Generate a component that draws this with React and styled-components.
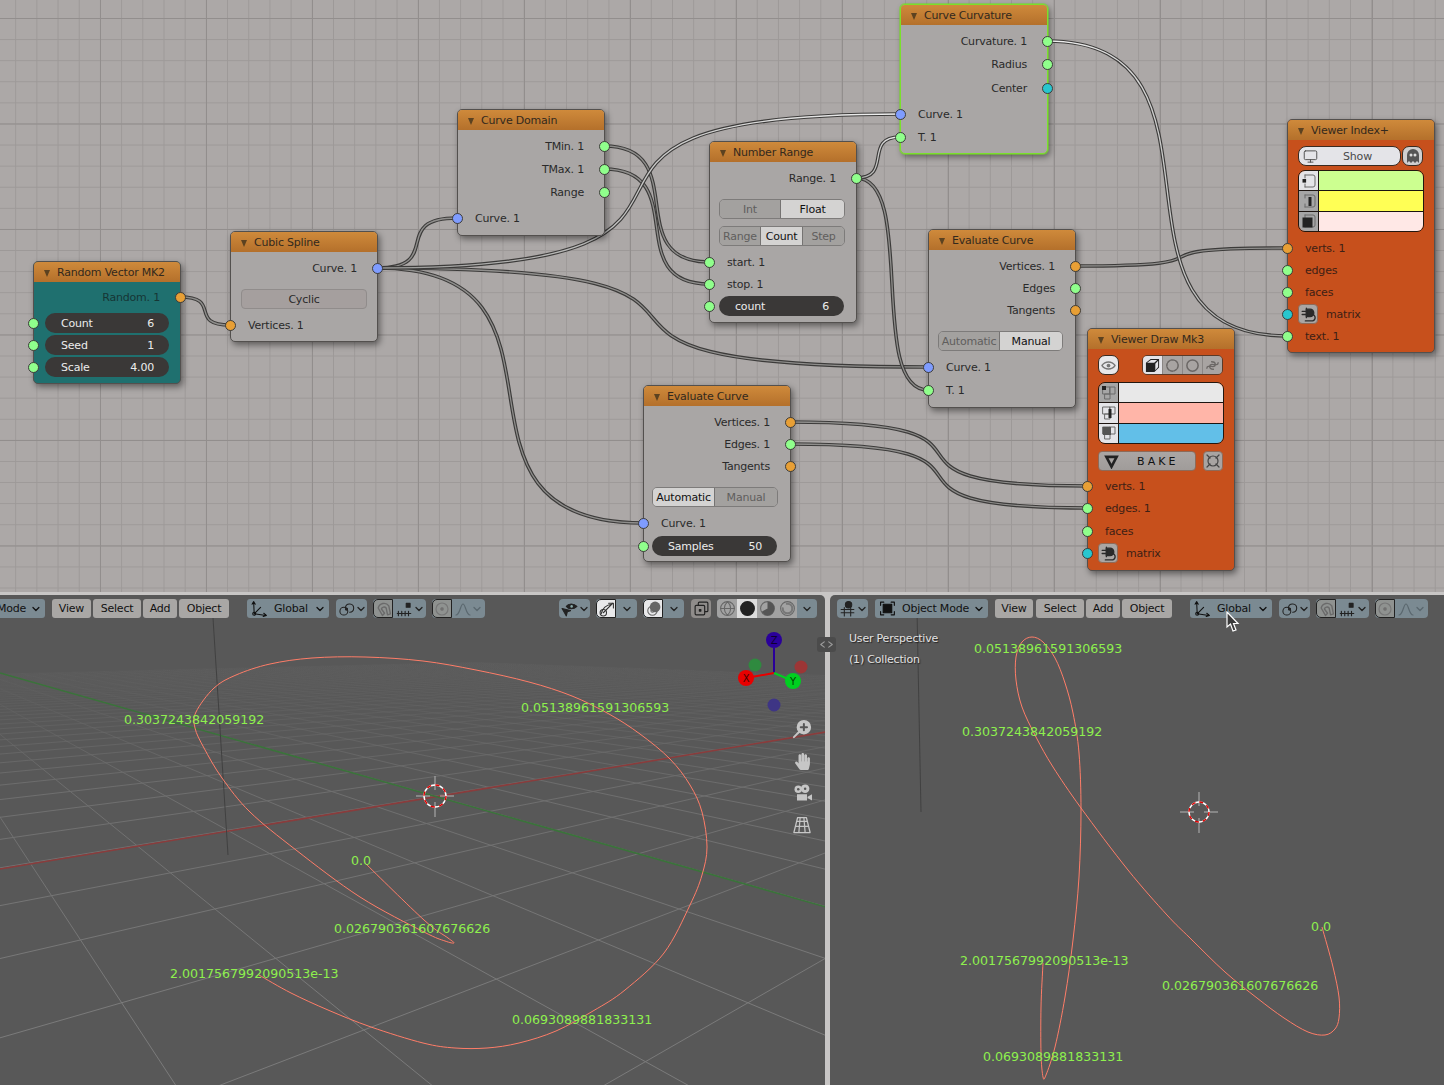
import React from 'react';
import styled, { createGlobalStyle } from 'styled-components';
import { FaHandPaper } from 'react-icons/fa';
import { Monitor } from 'lucide-react';

const Global = createGlobalStyle`
  html, body { margin: 0; padding: 0; background: #585858; }
  * { box-sizing: border-box; }
  #root { font-family: "DejaVu Sans", "Liberation Sans", sans-serif; font-size: 11px; letter-spacing: -0.2px; }
`;

const Page = styled.div`width: 1444px; height: 1085px; overflow: hidden; display: flex; flex-direction: column;`;

/* ---------- node editor ---------- */
const Editor = styled.div`
  position: relative; height: 592px; flex: none; overflow: hidden;
  background-color: #aca8a7;
  background-image:
    linear-gradient(to right, #928e8d 1px, transparent 1px),
    linear-gradient(to bottom, #928e8d 1px, transparent 1px),
    linear-gradient(to right, #9d9998 1px, transparent 1px),
    linear-gradient(to bottom, #9d9998 1px, transparent 1px);
  background-size: 106px 106px, 105.5px 105.5px, 21.2px 21.2px, 21.1px 21.1px;
  background-position: 100px 0, 0 18px, 15.2px 0, 0 18px;
`;
const WireLayer = styled.svg`position: absolute; inset: 0; width: 100%; height: 100%;`;
const Node = styled.div`
  position: absolute; left: ${p => p.$x}px; top: ${p => p.$y}px; width: 148px; height: ${p => p.$h}px;
  background: ${p => p.$bg || '#a9a6a5'};
  border: 1px solid ${p => p.$active ? '#7be02c' : '#53504e'};
  border-radius: 5px;
  box-shadow: ${p => p.$active ? '0 0 0 1px rgba(120,220,40,.55), ' : ''}2px 3px 6px rgba(0,0,0,.45);
  color: ${p => p.$ink || '#2a2a2a'};
`;
const Head = styled.div`
  height: 20px; display: flex; align-items: center; padding-left: 10px; gap: 7px;
  background: linear-gradient(#cf8a3b, #b4702b);
  border-radius: 4px 4px 0 0; color: #33291d; white-space: nowrap;
`;
const Arrow = styled.i`
  width: 0; height: 0; border-left: 3.5px solid transparent; border-right: 3.5px solid transparent;
  border-top: 7px solid #5c4220; margin-top: 2px;
`;
const Row = styled.div`
  position: relative; height: 20px; margin-top: ${p => p.$mt}px; display: flex; align-items: center;
  justify-content: ${p => p.$out ? 'flex-end' : 'flex-start'};
  padding: ${p => p.$out ? '0 20px 0 0' : `0 0 0 ${p.$pl || 17}px`}; white-space: nowrap;
`;
const WidgetRow = styled.div`
  position: relative; height: 20px; margin-top: ${p => p.$mt}px; padding-left: ${p => p.$l || 10}px;
  display: flex; align-items: stretch; gap: ${p => p.$gap || 0}px;
`;
const Socket = styled.span`
  position: absolute; top: 4.5px; width: 11px; height: 11px; border-radius: 50%;
  background: ${p => p.$c}; border: 1px solid #3d3c3a;
  ${p => p.$out ? 'right: -6px;' : 'left: -6px;'}
`;
const Pill = styled.div`
  width: ${p => p.$w || 124}px; background: #3a3837; border-radius: 10px; color: #ececec;
  display: flex; justify-content: space-between; align-items: center; padding: 0 15px 0 16px;
`;
const Toggle = styled.div`
  width: ${p => p.$w || 126}px; display: flex; border: 1px solid #7d7b7a; border-radius: 5px; overflow: hidden;
`;
const ToggleCell = styled.div`
  width: ${p => p.$w}px; flex: ${p => p.$w ? 'none' : 1}; display: flex; align-items: center; justify-content: center;
  background: ${p => p.$on ? '#d4d3d2' : '#a3a19f'}; color: ${p => p.$on ? '#111' : '#605e5d'};
  & + & { border-left: 1px solid #757372; }
`;
const WideButton = styled.div`
  width: 126px; display: flex; align-items: center; justify-content: center;
  background: #a59f9e; border: 1px solid #908c8b; border-radius: 4px; color: #2a2a2a;
`;
const ShowBtn = styled.div`
  width: 103px; background: #e4e4e8; border: 1px solid #3a2a20; border-radius: 8px; color: #4a4a4a;
  display: flex; align-items: center; justify-content: center; position: relative; padding-left: 16px;
  & > svg { position: absolute; left: 4px; }
`;
const IconBtn = styled.div`
  width: ${p => p.$w || 21}px; display: flex; align-items: center; justify-content: center; flex: none;
  background: ${p => p.$bg || '#cfcfd0'}; border: 1px solid ${p => p.$line || '#3a2a20'}; border-radius: ${p => p.$r || 7}px;
  color: ${p => p.$ink || '#333'}; margin-left: ${p => p.$ml || 0}px;
`;
const IconStrip = styled.div`
  display: flex; margin-left: 23px; border: 1px solid #5b3a28; border-radius: 5px; overflow: hidden; width: 81px;
`;
const StripCell = styled.div`
  flex: 1; display: flex; align-items: center; justify-content: center;
  background: ${p => p.$on ? '#e4e4e8' : '#a8a4a2'}; color: ${p => p.$on ? '#222' : '#6e6a68'};
  & + & { border-left: 1px solid #8a8684; }
`;
const BakeBtn = styled.div`
  width: 98px; background: linear-gradient(#aaa6a4, #a09c9a); border: 1px solid #8e6a58; border-radius: 4px; color: #111;
  display: flex; align-items: center; letter-spacing: 3.1px; font-size: 11px; padding-left: 5px; gap: 18px;
`;
const PlugBtn = styled.div`
  position: absolute; left: 10px; top: 0; width: 20px; height: 20px; background: #aaa6a4;
  border: 1px solid #8e6a58; border-radius: 4px; display: flex; align-items: center; justify-content: center; color: #2a2a2a;
`;
const ColorTable = styled.div`
  margin: ${p => p.$mt}px 0 0 10px; width: 126px; height: ${p => p.$h}px; display: flex; flex-direction: column;
  border: 1px solid #23170f; border-radius: 7px; overflow: hidden;
`;
const ColorRow = styled.div`
  flex: 1; display: flex; & + & { border-top: 1px solid #1c1410; }
`;
const IconCell = styled.div`
  width: 20px; flex: none; border-right: 1px solid #1c1410; background: ${p => p.$bg};
  display: flex; align-items: center; justify-content: center; color: #555;
`;
const Swatch = styled.div`flex: 1; background: ${p => p.$c};`;

/* ---------- viewports ---------- */
const ViewRow = styled.div`
  position: relative; flex: 1; display: flex; gap: 5px; padding-top: 3px; background: #c8c6c5;
`;
const Viewport = styled.div`
  position: relative; width: ${p => p.$w}px; overflow: hidden; background: #585858;
  border-radius: ${p => p.$r};
`;
const Scene = styled.svg`position: absolute; inset: 0; width: 100%; height: 100%;`;
const Bar = styled.div`position: relative; display: flex; align-items: center; height: 19px; margin-top: 4px; padding-right: 8px; color: #111;`;
const Menu = styled.div`
  width: ${p => p.$w}px; height: 19px; flex: none; margin-left: ${p => p.$ml}px; background: #a9a7a5; border-radius: 3px;
  display: flex; align-items: center; justify-content: center; white-space: nowrap;
`;
const Drop = styled(Menu)`
  background: #7b8a92; justify-content: flex-start; padding: 0 4px 0 4px; gap: 5px;
  & > svg:last-child { margin-left: auto; }
`;
const DropText = styled.span`margin-left: ${p => p.$ml}px;`;
const Tools = styled.div`
  width: ${p => p.$w}px; height: 19px; flex: none; display: flex; margin-left: ${p => p.$ml}px; background: #7b8a92; border-radius: 4px; overflow: hidden;
  ${p => p.$push ? 'margin-left: auto;' : ''}
`;
const Tool = styled.div`
  width: ${p => p.$w || 20}px; flex: none; display: flex; align-items: center; justify-content: center; gap: 1px;
  background: ${p => p.$on ? '#e8e8ea' : p.$bg || 'transparent'}; color: ${p => p.$dim ? '#5b686f' : p.$on ? '#333' : '#222'};
  ${p => p.$on === 'soft' ? 'background:#8f9290;' : ''}
  ${p => p.$edge ? 'border: 1px solid #222; border-radius: 5px 0 0 5px;' : ''}
`;
const Flag = styled.div`
  position: absolute; left: ${p => p.$x}px; top: ${p => p.$y}px; transform: translateY(-50%);
  font-size: 12.6px; letter-spacing: 0; color: #8ef04e; white-space: nowrap;
`;
const Overlay = styled.div`
  position: absolute; left: 19px; top: ${p => p.$y}px; transform: translateY(-50%);
  color: #e2e2e2; text-shadow: 1px 1px 1px #222; white-space: nowrap;
`;
const NavColumn = styled.div`
  position: absolute; right: 13px; top: 124px; display: flex; flex-direction: column; gap: 12px; color: #c6c6c6;
`;
const NavIcon = styled.div`width: 20px; height: 20px; display: flex; align-items: center; justify-content: center;`;
const SideTab = styled.div`
  position: absolute; left: 817px; top: 45px; width: 19px; height: 15px; background: #4b4b4b; border-radius: 3px;
  display: flex; align-items: center; justify-content: space-between; padding: 0 2px; color: #9a9a9a;
`;
const Cursor = styled.svg`position: absolute; left: 1225px; top: 19px;`;

/* ---------- icons ---------- */
const Ic = ({ s = 14, v = 16, children, ...r }) => (
  <svg width={s} height={s} viewBox={`0 0 ${v} ${v}`} fill="none" stroke="currentColor" strokeWidth="1.2" strokeLinecap="round" strokeLinejoin="round" {...r}>{children}</svg>
);
const Chev = () => <Ic s={10} v={10} strokeWidth="1.3"><path d="M2 3.5 5 6.500 8 3.500" /></Ic>;
const Axes = () => <Ic s={17} strokeWidth="1"><path d="M3 13 2.500 2M1 4l1.500-2.500L4 4M3 13 14 14.500M12 12.500l2.500 2-3 1M3 13 9 7" /><circle cx="3" cy="13" r="1.400" /></Ic>;
const Link = () => <Ic s={17} strokeWidth="1"><circle cx="5.500" cy="10.500" r="3.700" /><path d="M7 7A3.900 3.900 0 1 1 11 11.500" /><circle cx="8" cy="8.500" r="1" fill="currentColor" /></Ic>;
const Magnet = () => <Ic s={17} strokeWidth="1.300"><path d="M3 7.500A5.600 5.600 0 0 1 13 5.500L14.500 13 11.800 14 10.500 7.500A2.600 2.600 0 0 0 6 8.500L9 12.500 7 14.500Z" stroke="#6a6a6a" /></Ic>;
const Snap = () => <Ic s={18} strokeWidth="1"><path d="M2 12h12M3 10v4M6 10v4M9 10v4M12 10v4" /><rect x="10" y="3" width="3.400" height="3.400" fill="currentColor" /></Ic>;
const Prop = () => <Ic s={16} stroke="#777"><circle cx="8" cy="8" r="6" /><circle cx="8" cy="8" r="1.300" fill="#666" /></Ic>;
const Bell = () => <Ic s={16}><path d="M1 14C5 14 5.500 3 8 3s3 11 7 11" /></Ic>;
const EyeFilter = () => <Ic s={17} strokeWidth="1"><path d="M5 6c2-3 7-3 10 0-3 3-8 3-10 0Z" fill="#222" /><circle cx="10" cy="6" r="1.200" fill="#8aa" stroke="none" /><path d="M1 8 9 10 6 11 5 15Z" fill="#222" /></Ic>;
const GizmoIc = () => <Ic s={17} strokeWidth="1"><path d="M3 13A11 11 0 0 1 13 4M10 3h4.500v4.500M14 3 5 12" /><circle cx="5" cy="12" r="3" /></Ic>;
const OverlayIc = () => <Ic s={17} strokeWidth="1"><circle cx="9.500" cy="6.500" r="5" fill="#666" stroke="none" /><circle cx="7" cy="10" r="4.400" stroke="#666" /><circle cx="7" cy="10" r="1.500" stroke="#666" /></Ic>;
const Xray = () => <Ic s={17} strokeWidth="1.100"><rect x="5" y="2" width="9" height="9" rx="1" /><rect x="2" y="5" width="9" height="9" rx="1" fill="#8f8c8a" /><rect x="6" y="9" width="1.400" height="1.400" fill="currentColor" /></Ic>;
const Sphere = ({ k }) => (
  <Ic s={17} strokeWidth="1">
    <circle cx="8" cy="8" r="6.500" fill={k === 'solid' ? '#222' : 'none'} stroke={k === 'solid' ? '#222' : '#666'} />
    {k === 'wire' && <path d="M1.500 8h13M8 1.500c-4 4-4 9 0 13M8 1.500c4 4 4 9 0 13" stroke="#666" />}
    {k === 'mat' && <path d="M8 1.500A6.500 6.500 0 0 1 8 14.500L8 8 2.500 11A6.500 6.500 0 0 0 8 14.500" fill="#555" stroke="none" />}
    {k === 'ren' && <circle cx="8" cy="8" r="4.500" stroke="#777" strokeWidth="2" strokeDasharray="14 6" />}
  </Ic>
);
const EditorType = () => <Ic s={17} strokeWidth="1"><path d="M2 9h12M2 12h12M5 7v8M11 7v8" /><circle cx="9" cy="4.500" r="3" fill="#222" /></Ic>;
const ObjMode = () => <Ic s={17} strokeWidth="1.100"><path d="M1.500 5V2h3M11.500 2h3v3M14.500 11v3h-3M4.500 14h-3v-3" /><rect x="4" y="4" width="8" height="8" fill="currentColor" /></Ic>;
const Ghost = () => <Ic s={16} stroke="none"><path d="M2 15V7a6 6 0 0 1 12 0v8l-2-2-2 2-2-2-2 2-2-2Z" fill="#555" /><circle cx="6" cy="7" r="1.500" fill="#ddd" /><circle cx="10" cy="7" r="1.500" fill="#ddd" /></Ic>;
const Eye = () => <Ic s={15} stroke="#777" strokeWidth="1.400"><path d="M1 8c3.500-5 10.500-5 14 0-3.500 5-10.500 5-14 0Z" /><circle cx="8" cy="8" r="2" fill="#777" stroke="none" /></Ic>;
const Cube = () => <Ic s={15} stroke="none"><path d="M1 5 6 1h9v9l-5 5H1Z" fill="#222" /><path d="M2.200 5 6.400 2H13L9.800 5ZM11 6l3-3v6.500L11 13Z" fill="#e4e4e8" /></Ic>;
const Ring = ({ dash }) => <Ic s={15} stroke="#6b6765" strokeWidth="1.600"><circle cx="8" cy="8" r="6" strokeDasharray={dash ? '3 1.400' : undefined} /></Ic>;
const Snake = () => <Ic s={15} stroke="#6b6765" strokeWidth="1.400"><path d="M2 11c0-5 9 1 9-4 0-2-2-3-4-3M14 5c0 5-9-1-9 4 0 2 2 3 4 3" /></Ic>;
const Plug = () => <Ic s={17} strokeWidth="1.200"><path d="M6 3h3.500a3.500 3.500 0 0 1 0 7H6Z" fill="currentColor" /><path d="M2 5h4M2 8h4M6 2v9M12 8c3 1 3 5 0 6H5" /></Ic>;
const Bake = () => <Ic s={15} strokeWidth="2.800" stroke="#222" strokeLinejoin="miter"><path d="M2.500 3h11L8 13.500Z" /></Ic>;
const Wireframe = () => <Ic s={16} strokeWidth="1.200" stroke="#444"><circle cx="8" cy="8" r="5" /><path d="M2 2l3 3M14 2l-3 3M2 14l3-3M14 14l-3-3" /></Ic>;

const Sel = ({ kind, mode }) => (
  <Ic s={16} strokeWidth="1" stroke="#6a6a6a">
    {mode === 'a' && <path d="M4 2h8a2 2 0 0 1 2 2v8a2 2 0 0 1-2 2H4" />}
    {mode === 'a' && <path d="M4 14V11M4 5V2" />}
    {mode === 'b' && <><rect x="2" y="2" width="7" height="7" /><rect x="9" y="2" width="5" height="7" /><rect x="4" y="9" width="5" height="5" /></>}
    {kind === 'v' && <rect x="1.500" y="6" width="3.600" height="3.600" fill="#222" stroke="none" />}
    {kind === 'v2' && <rect x="1" y="1" width="4" height="4" fill="#222" stroke="none" />}
    {kind === 'e' && <rect x="7.500" y="4" width="3" height="9" fill="#222" stroke="none" />}
    {kind === 'f' && <rect x="1.500" y="4.500" width="10" height="10" fill="#222" stroke="none" />}
    {kind === 'f2' && <rect x="2" y="2" width="8" height="8" fill="#555" stroke="none" />}
  </Ic>
);

/* ---------- wires ---------- */
const C = { o: '#e89f35', g: '#90ff8c', b: '#7f9cff', c: '#28c6cf' };
const Wire = ({ a, b, id, from, to }) => {
  const h = (b[0] - a[0]) * 0.85;
  const d = `M${a[0]} ${a[1]} C${a[0] + h} ${a[1]} ${b[0] - h} ${b[1]} ${b[0]} ${b[1]}`;
  return (
    <g fill="none">
      {id && (
        <linearGradient id={id} gradientUnits="userSpaceOnUse" x1={a[0]} x2={b[0]} y1="0" y2="0">
          <stop offset="0" stopColor={from} /><stop offset="1" stopColor={to} />
        </linearGradient>
      )}
      <path d={d} stroke="#3c3b3a" strokeWidth="3.600" />
      <path d={d} stroke={id ? `url(#${id})` : '#8f8e8c'} strokeWidth="1.300" />
    </g>
  );
};
const W = [
  { a: [180, 297], b: [230, 325] },
  { a: [377, 268], b: [457, 218] },
  { a: [377, 268], b: [928, 367] },
  { a: [377, 268], b: [643, 523] },
  { a: [604, 146], b: [709, 262] },
  { a: [604, 169], b: [709, 284] },
  { a: [856, 178], b: [928, 390] },
  { a: [1075, 266], b: [1287, 248] },
  { a: [790, 422], b: [1088, 486] },
  { a: [790, 444], b: [1088, 508] },
  { a: [377, 268], b: [900, 114], id: 'w1', from: '#9a9a98', to: '#f2f2f2' },
  { a: [856, 178], b: [900, 137], id: 'w2', from: '#a0a09e', to: '#f2f2f2' },
  { a: [1047, 41], b: [1287, 336], id: 'w3', from: '#f2f2f2', to: '#a0a09e' },
];

/* ---------- 3D scene ---------- */
const ground = (cx, cy, vr, vg, a, b, N = 40) => {
  const pt = (u, v) => {
    const s = u * a, t = v * b, d = 1 + s + t;
    return [(cx + s * vr[0] + t * vg[0]) / d, (cy + s * vr[1] + t * vg[1]) / d];
  };
  const out = [];
  for (let k = -N; k <= N; k++) {
    const v0 = Math.max(-N, (0.04 - 1 - k * a) / b);
    const u0 = Math.max(-N, (0.04 - 1 - k * b) / a);
    if (v0 < N) { const p = pt(k, v0), q = pt(k, N); out.push(`M${p[0].toFixed(1)} ${p[1].toFixed(1)}L${q[0].toFixed(1)} ${q[1].toFixed(1)}`); }
    if (u0 < N) { const p = pt(u0, k), q = pt(N, k); out.push(`M${p[0].toFixed(1)} ${p[1].toFixed(1)}L${q[0].toFixed(1)} ${q[1].toFixed(1)}`); }
  }
  return out.join('');
};
const smooth = pts => {
  let d = `M${pts[0][0]} ${pts[0][1]}`;
  for (let i = 0; i < pts.length - 1; i++) {
    const p0 = pts[i - 1] || pts[i], p1 = pts[i], p2 = pts[i + 1], p3 = pts[i + 2] || p2;
    d += `C${(p1[0] + (p2[0] - p0[0]) / 6).toFixed(1)} ${(p1[1] + (p2[1] - p0[1]) / 6).toFixed(1)} ${(p2[0] - (p3[0] - p1[0]) / 6).toFixed(1)} ${(p2[1] - (p3[1] - p1[1]) / 6).toFixed(1)} ${p2[0]} ${p2[1]}`;
  }
  return d;
};
const leftCurve = [[365,863],[424,920],[448,938],[454,943],[445,941],[424,932],[360,897],[296,850],[250,812],[222,778],[204,748],[195,728],[196,712],[214,688],[236,675],[270,664],[312,658],[365,657],[423,661],[476,670],[529,682],[572,696],[609,714],[640,734],[670,759],[690,785],[702,812],[707,847],[702,875],[690,905],[664,953],[625,990],[593,1011],[556,1031],[519,1043],[487,1048],[455,1048],[423,1043],[371,1027],[328,1010],[291,993],[259,975]];
const rightCurve = [[1322,927],[1333,967],[1339,997],[1339,1018],[1335,1029],[1325,1035],[1308,1032],[1284,1018],[1257,998],[1225,972],[1190,938],[1167,915],[1128,870],[1081,808],[1053,767],[1036,737],[1022,707],[1016,680],[1016,657],[1022,642],[1032,637],[1043,642],[1055,658],[1065,683],[1073,713],[1079,753],[1081,810],[1079,877],[1073,940],[1065,997],[1055,1047],[1046,1075],[1043,1077],[1041,1053],[1041,1007],[1043,963]];

const View3DCursor = ({ x, y, r }) => {
  const seg = (2 * Math.PI * r) / 16;
  return (
    <g fill="none">
      <path d={`M${x} ${y - 20}V${y - 6}M${x} ${y + 6}V${y + 21}M${x - 19} ${y}H${x - 5}M${x + 5} ${y}H${x + 19}`} stroke="#b4b4b4" />
      <circle cx={x} cy={y} r={r} stroke="#fff" strokeWidth="1.400" />
      <circle cx={x} cy={y} r={r} stroke="#e00000" strokeWidth="1.400" strokeDasharray={`${seg} ${seg}`} />
    </g>
  );
};
const Gizmo = () => (
  <g fontFamily="'DejaVu Sans', sans-serif" fontSize="10" textAnchor="middle">
    <circle cx="755" cy="665" r="6.500" fill="#2f8a3f" />
    <circle cx="801" cy="667" r="6.500" fill="#9c3636" />
    <circle cx="774" cy="705" r="6.500" fill="#3e3585" />
    <path d="M774 648V673" stroke="#2a009a" strokeWidth="2" />
    <path d="M774 673 746 678" stroke="#e80000" strokeWidth="2" />
    <path d="M774 673 793 681" stroke="#00d020" strokeWidth="2" />
    <circle cx="774" cy="640" r="8" fill="#2a009a" /><text x="774" y="644" fill="#0d0030">Z</text>
    <circle cx="746" cy="678" r="8" fill="#e80000" /><text x="746" y="682" fill="#400">X</text>
    <circle cx="793" cy="681" r="8" fill="#00d020" /><text x="793" y="685" fill="#040">Y</text>
  </g>
);

const leftFlags = [[124,719,'0.3037243842059192'],[521,707,'0.05138961591306593'],[351,860,'0.0'],[334,928,'0.026790361607676626'],[170,973,'2.0017567992090513e-13'],[512,1019,'0.0693089881833131']];
const rightFlags = [[974,648,'0.05138961591306593'],[962,731,'0.3037243842059192'],[1311,926,'0.0'],[1162,985,'0.026790361607676626'],[960,960,'2.0017567992090513e-13'],[983,1056,'0.0693089881833131']];

const SnapTools = ({ ml }) => (
  <>
    <Tools $w={31} $ml={ml}><Tool $w={31}><Link /><Chev /></Tool></Tools>
    <Tools $w={53} $ml={6}><Tool $on="soft" $edge $w={20}><Magnet /></Tool><Tool $w={33}><Snap /><Chev /></Tool></Tools>
    <Tools $w={53} $ml={6}><Tool $on="soft" $edge $w={20}><Prop /></Tool><Tool $w={33} $dim><Bell /><Chev /></Tool></Tools>
  </>
);

export default function App() {
  return (
    <Page>
      <Global />
      <Editor>
        <WireLayer viewBox="0 0 1444 592">
          {W.map((w, i) => <Wire key={i} {...w} />)}
        </WireLayer>

        <Node $x={33} $y={261} $h={123} $bg="#1f706f" $ink="#163635">
          <Head><Arrow />Random Vector MK2</Head>
          <Row $out $mt={5}>Random. 1<Socket $out $c={C.o} /></Row>
          <WidgetRow $mt={6} $l={11}><Socket $c={C.g} /><Pill><span>Count</span><span>6</span></Pill></WidgetRow>
          <WidgetRow $mt={2} $l={11}><Socket $c={C.g} /><Pill><span>Seed</span><span>1</span></Pill></WidgetRow>
          <WidgetRow $mt={2} $l={11}><Socket $c={C.g} /><Pill><span>Scale</span><span>4.00</span></Pill></WidgetRow>
        </Node>

        <Node $x={230} $y={231} $h={111}>
          <Head><Arrow />Cubic Spline</Head>
          <Row $out $mt={6}>Curve. 1<Socket $out $c={C.b} /></Row>
          <WidgetRow $mt={11}><WideButton>Cyclic</WideButton></WidgetRow>
          <Row $mt={6}><Socket $c={C.o} />Vertices. 1</Row>
        </Node>

        <Node $x={457} $y={109} $h={127}>
          <Head><Arrow />Curve Domain</Head>
          <Row $out $mt={6}>TMin. 1<Socket $out $c={C.g} /></Row>
          <Row $out $mt={3}>TMax. 1<Socket $out $c={C.g} /></Row>
          <Row $out $mt={3}>Range<Socket $out $c={C.g} /></Row>
          <Row $mt={6}><Socket $c={C.b} />Curve. 1</Row>
        </Node>

        <Node $x={709} $y={141} $h={182}>
          <Head><Arrow />Number Range</Head>
          <Row $out $mt={6}>Range. 1<Socket $out $c={C.g} /></Row>
          <WidgetRow $mt={11} $l={9}><Toggle><ToggleCell $w={60}>Int</ToggleCell><ToggleCell $on>Float</ToggleCell></Toggle></WidgetRow>
          <WidgetRow $mt={7} $l={9}><Toggle><ToggleCell $w={40}>Range</ToggleCell><ToggleCell $w={42} $on>Count</ToggleCell><ToggleCell>Step</ToggleCell></Toggle></WidgetRow>
          <Row $mt={6}><Socket $c={C.g} />start. 1</Row>
          <Row $mt={2}><Socket $c={C.g} />stop. 1</Row>
          <WidgetRow $mt={2} $l={9}><Socket $c={C.g} /><Pill $w={125}><span>count</span><span>6</span></Pill></WidgetRow>
        </Node>

        <Node $x={900} $y={4} $h={150} $active>
          <Head><Arrow />Curve Curvature</Head>
          <Row $out $mt={6}>Curvature. 1<Socket $out $c={C.g} /></Row>
          <Row $out $mt={3}>Radius<Socket $out $c={C.g} /></Row>
          <Row $out $mt={4}>Center<Socket $out $c={C.c} /></Row>
          <Row $mt={6}><Socket $c={C.b} />Curve. 1</Row>
          <Row $mt={3}><Socket $c={C.g} />T. 1</Row>
        </Node>

        <Node $x={928} $y={229} $h={179}>
          <Head><Arrow />Evaluate Curve</Head>
          <Row $out $mt={6}>Vertices. 1<Socket $out $c={C.o} /></Row>
          <Row $out $mt={2}>Edges<Socket $out $c={C.g} /></Row>
          <Row $out $mt={2}>Tangents<Socket $out $c={C.o} /></Row>
          <WidgetRow $mt={11} $l={9}><Toggle $w={125}><ToggleCell $w={60}>Automatic</ToggleCell><ToggleCell $on>Manual</ToggleCell></Toggle></WidgetRow>
          <Row $mt={6}><Socket $c={C.b} />Curve. 1</Row>
          <Row $mt={3}><Socket $c={C.g} />T. 1</Row>
        </Node>

        <Node $x={643} $y={385} $h={177}>
          <Head><Arrow />Evaluate Curve</Head>
          <Row $out $mt={6}>Vertices. 1<Socket $out $c={C.o} /></Row>
          <Row $out $mt={2}>Edges. 1<Socket $out $c={C.g} /></Row>
          <Row $out $mt={2}>Tangents<Socket $out $c={C.o} /></Row>
          <WidgetRow $mt={11} $l={8}><Toggle><ToggleCell $w={61} $on>Automatic</ToggleCell><ToggleCell>Manual</ToggleCell></Toggle></WidgetRow>
          <Row $mt={6}><Socket $c={C.b} />Curve. 1</Row>
          <WidgetRow $mt={3} $l={8}><Socket $c={C.g} /><Pill $w={125}><span>Samples</span><span>50</span></Pill></WidgetRow>
        </Node>

        <Node $x={1287} $y={119} $h={234} $bg="#c7501c" $ink="#3d2015">
          <Head><Arrow />Viewer Index+</Head>
          <WidgetRow $mt={6} $gap={1}>
            <ShowBtn><Monitor size={15} strokeWidth={1.6} color="#555" />Show</ShowBtn>
            <IconBtn><Ghost /></IconBtn>
          </WidgetRow>
          <ColorTable $mt={4} $h={62}>
            <ColorRow><IconCell $bg="#e4e4e8"><Sel kind="v" mode="a" /></IconCell><Swatch $c="#ccff90" /></ColorRow>
            <ColorRow><IconCell $bg="#a6a6a6"><Sel kind="e" mode="a" /></IconCell><Swatch $c="#ffff55" /></ColorRow>
            <ColorRow><IconCell $bg="#a6a6a6"><Sel kind="f" mode="a" /></IconCell><Swatch $c="#ffe8e6" /></ColorRow>
          </ColorTable>
          <Row $mt={6}><Socket $c={C.o} />verts. 1</Row>
          <Row $mt={2}><Socket $c={C.g} />edges</Row>
          <Row $mt={2}><Socket $c={C.g} />faces</Row>
          <Row $mt={2} $pl={38}><Socket $c={C.c} /><PlugBtn><Plug /></PlugBtn>matrix</Row>
          <Row $mt={2}><Socket $c={C.g} />text. 1</Row>
        </Node>

        <Node $x={1087} $y={328} $h={243} $bg="#c7501c" $ink="#3d2015">
          <Head><Arrow />Viewer Draw Mk3</Head>
          <WidgetRow $mt={6}>
            <IconBtn $bg="#e8e8ea"><Eye /></IconBtn>
            <IconStrip>
              <StripCell $on><Cube /></StripCell>
              <StripCell><Ring dash /></StripCell>
              <StripCell><Ring /></StripCell>
              <StripCell><Snake /></StripCell>
            </IconStrip>
          </WidgetRow>
          <ColorTable $mt={7} $h={62}>
            <ColorRow><IconCell $bg="#a6a6a6"><Sel kind="v2" mode="b" /></IconCell><Swatch $c="#e8e8e8" /></ColorRow>
            <ColorRow><IconCell $bg="#e4e4e8"><Sel kind="e" mode="b" /></IconCell><Swatch $c="#ffb5a8" /></ColorRow>
            <ColorRow><IconCell $bg="#e4e4e8"><Sel kind="f2" mode="b" /></IconCell><Swatch $c="#62bfe8" /></ColorRow>
          </ColorTable>
          <WidgetRow $mt={7} $gap={7}>
            <BakeBtn><Bake />BAKE</BakeBtn>
            <IconBtn $bg="#a8a4a2" $line="#8e6a58" $w={20} $r={4}><Wireframe /></IconBtn>
          </WidgetRow>
          <Row $mt={5}><Socket $c={C.o} />verts. 1</Row>
          <Row $mt={2}><Socket $c={C.g} />edges. 1</Row>
          <Row $mt={3}><Socket $c={C.g} />faces</Row>
          <Row $mt={2} $pl={38}><Socket $c={C.c} /><PlugBtn><Plug /></PlugBtn>matrix</Row>
        </Node>
      </Editor>

      <ViewRow>
        <Viewport $w={825} $r="0 5px 0 0">
          <Scene viewBox="0 595 825 490">
            <defs>
              <linearGradient id="fadeL" gradientUnits="userSpaceOnUse" x1="0" x2="0" y1="650" y2="1000">
                <stop offset="0" stopColor="#666" stopOpacity="0" />
                <stop offset=".15" stopColor="#666" stopOpacity=".35" />
                <stop offset=".4" stopColor="#6e6e6e" />
                <stop offset="1" stopColor="#7a7a7a" />
              </linearGradient>
            </defs>
            <path d={ground(435, 796, [1380, 640], [-116, 640], 0.06, 0.09)} stroke="url(#fadeL)" fill="none" />
            <path d="M0 869 826 732" stroke="#8a3c3c" strokeWidth="1.600" />
            <path d="M0 673 826 907" stroke="#3a733a" strokeWidth="1.600" />
            <path d="M213 618 228 855" stroke="#414141" />
            <path d={smooth(leftCurve)} fill="none" stroke="#ff7d68" />
            <View3DCursor x={435} y={796} r={11} />
            <Gizmo />
          </Scene>
          <Bar>
            <Drop $w={59} $ml={-14}><DropText $ml={7}>Mode</DropText><Chev /></Drop>
            <Menu $w={39} $ml={7}>View</Menu>
            <Menu $w={48} $ml={2}>Select</Menu>
            <Menu $w={34} $ml={2}>Add</Menu>
            <Menu $w={50} $ml={2}>Object</Menu>
            <Drop $w={82} $ml={18}><Axes /><DropText $ml={1}>Global</DropText><Chev /></Drop>
            <SnapTools ml={7} />
            <Tools $w={31} $push><Tool $w={31}><EyeFilter /><Chev /></Tool></Tools>
            <Tools $w={41} $ml={6}><Tool $on $edge $w={20}><GizmoIc /></Tool><Tool $w={21}><Chev /></Tool></Tools>
            <Tools $w={41} $ml={6}><Tool $on $edge $w={20}><OverlayIc /></Tool><Tool $w={21}><Chev /></Tool></Tools>
            <Tools $w={20} $ml={7}><Tool $bg="#8f8c8a"><Xray /></Tool></Tools>
            <Tools $w={100} $ml={6}>
              <Tool $bg="#a2a2a2"><Sphere k="wire" /></Tool>
              <Tool $bg="#dcdcdc"><Sphere k="solid" /></Tool>
              <Tool $bg="#a2a2a2"><Sphere k="mat" /></Tool>
              <Tool $bg="#a2a2a2"><Sphere k="ren" /></Tool>
              <Tool><Chev /></Tool>
            </Tools>
          </Bar>
          {leftFlags.map(([x, y, t]) => <Flag key={t} $x={x} $y={y - 595}>{t}</Flag>)}
          <NavColumn>
            <NavIcon>
              <Ic s={20} strokeWidth="1.600"><circle cx="9.500" cy="6.500" r="5" fill="currentColor" /><path d="M6 10 1.500 14.500" /><path d="M7 6.500h5M9.500 4v5" stroke="#555" /></Ic>
            </NavIcon>
            <NavIcon><FaHandPaper size={17} /></NavIcon>
            <NavIcon>
              <Ic s={20} stroke="none"><circle cx="5" cy="5" r="3" fill="currentColor" /><circle cx="10.500" cy="4.500" r="3.400" fill="currentColor" /><rect x="4" y="9" width="8" height="5" fill="currentColor" /><path d="M12.500 11 16 9v5l-3.500-2Z" fill="currentColor" /><circle cx="5" cy="5" r="1" fill="#555" /><circle cx="10.500" cy="4.500" r="1" fill="#555" /></Ic>
            </NavIcon>
            <NavIcon>
              <Ic s={20} strokeWidth="1"><path d="M4.500 2h7l3 12H1.500ZM1.500 14h13M3 9h10M4 5h8M6.500 2 5.500 14M9.500 2l1 12" /></Ic>
            </NavIcon>
          </NavColumn>
        </Viewport>

        <Viewport $w={614} $r="5px 0 0 0">
          <Scene viewBox="830 595 614 490">
            <path d="M917 610 921 812" stroke="#414141" />
            <path d={smooth(rightCurve)} fill="none" stroke="#ff7d68" />
            <View3DCursor x={1199} y={812} r={10} />
          </Scene>
          <Bar>
            <Tools $w={31} $ml={7}><Tool $w={31}><EditorType /><Chev /></Tool></Tools>
            <Drop $w={113} $ml={7}><ObjMode /><DropText $ml={1}>Object Mode</DropText><Chev /></Drop>
            <Menu $w={38} $ml={7}>View</Menu>
            <Menu $w={48} $ml={3}>Select</Menu>
            <Menu $w={34} $ml={2}>Add</Menu>
            <Menu $w={50} $ml={2}>Object</Menu>
            <Drop $w={82} $ml={18}><Axes /><DropText $ml={1}>Global</DropText><Chev /></Drop>
            <SnapTools ml={7} />
          </Bar>
          <Overlay $y={43}>User Perspective</Overlay>
          <Overlay $y={64}>(1) Collection</Overlay>
          {rightFlags.map(([x, y, t]) => <Flag key={t} $x={x - 830} $y={y - 595}>{t}</Flag>)}
        </Viewport>

        <SideTab>
          <Ic s={7} v={8} strokeWidth="1.400"><path d="M6 1 2 4l4 3" /></Ic>
          <Ic s={7} v={8} strokeWidth="1.400"><path d="M2 1l4 3-4 3" /></Ic>
        </SideTab>
        <Cursor width="16" height="22" viewBox="0 0 16 22">
          <path d="M2 1V16L5.500 13 8 20 11 19 8.500 12.500H13Z" fill="#3a3a3a" stroke="#fff" strokeWidth="1.200" />
        </Cursor>
      </ViewRow>
    </Page>
  );
}
